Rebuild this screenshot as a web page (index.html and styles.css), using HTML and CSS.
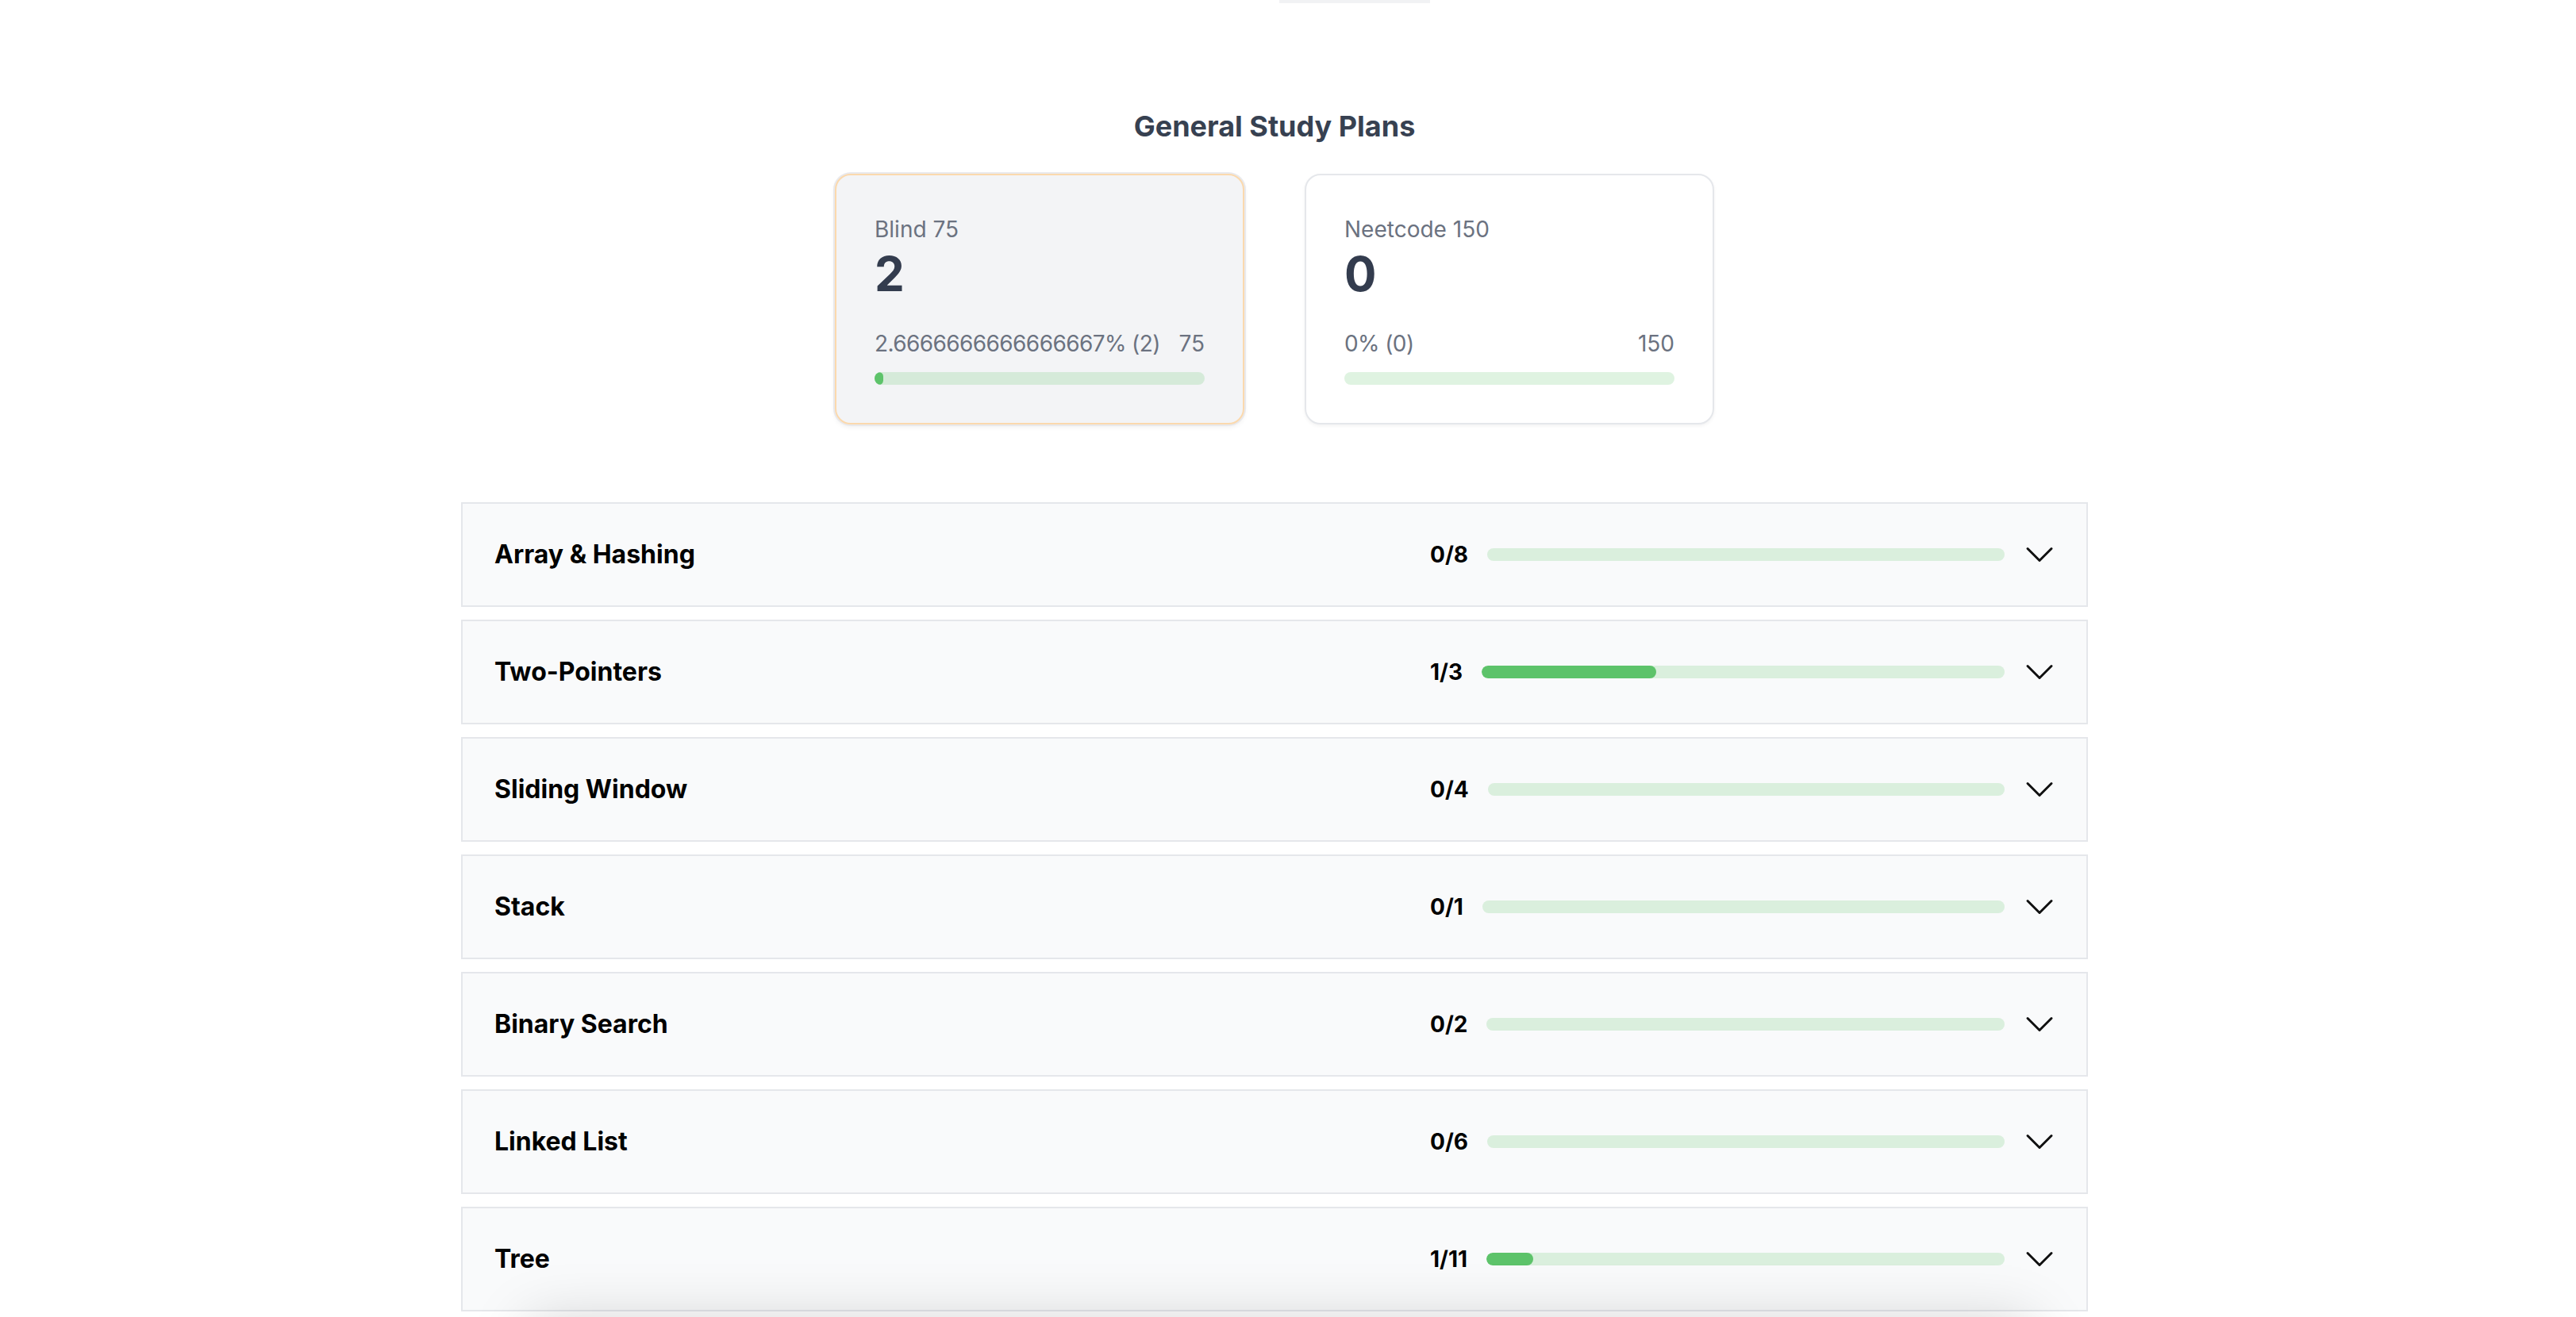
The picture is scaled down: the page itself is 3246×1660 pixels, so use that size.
FILE: index.html
```html
<!DOCTYPE html>
<html lang="en">
<head>
<meta charset="utf-8">
<title>Study Plans</title>
<link rel="stylesheet" href="styles.css">
</head>
<body>
<div class="page">
  <div class="topstub"></div>
  <h2 class="heading">General Study Plans</h2>
  <div class="plans">
    <div class="plan plan-active">
      <div class="plan-name">Blind 75</div>
      <div class="plan-count">2</div>
      <div class="plan-meta"><span class="plan-pct">2.6666666666666667% (2)</span><span>75</span></div>
      <div class="track"><div class="fill" style="width:2.67%"></div></div>
    </div>
    <div class="plan">
      <div class="plan-name">Neetcode 150</div>
      <div class="plan-count">0</div>
      <div class="plan-meta"><span class="plan-pct">0% (0)</span><span>150</span></div>
      <div class="track"><div class="fill" style="width:0%"></div></div>
    </div>
  </div>
  <div class="topics">
    <div class="topic">
      <div class="topic-title">Array &amp; Hashing</div>
      <div class="topic-right">
        <div class="topic-progress"><span class="topic-count">0/8</span><div class="track"><div class="fill" style="width:0%"></div></div></div>
        <svg class="chev" viewBox="0 0 24 24" fill="none" stroke="currentColor" stroke-width="1.5"><path stroke-linecap="round" stroke-linejoin="round" d="m19.5 8.25-7.5 7.5-7.5-7.5"/></svg>
      </div>
    </div>
    <div class="topic">
      <div class="topic-title">Two-Pointers</div>
      <div class="topic-right">
        <div class="topic-progress"><span class="topic-count">1/3</span><div class="track"><div class="fill" style="width:33.33%"></div></div></div>
        <svg class="chev" viewBox="0 0 24 24" fill="none" stroke="currentColor" stroke-width="1.5"><path stroke-linecap="round" stroke-linejoin="round" d="m19.5 8.25-7.5 7.5-7.5-7.5"/></svg>
      </div>
    </div>
    <div class="topic">
      <div class="topic-title">Sliding Window</div>
      <div class="topic-right">
        <div class="topic-progress"><span class="topic-count">0/4</span><div class="track"><div class="fill" style="width:0%"></div></div></div>
        <svg class="chev" viewBox="0 0 24 24" fill="none" stroke="currentColor" stroke-width="1.5"><path stroke-linecap="round" stroke-linejoin="round" d="m19.5 8.25-7.5 7.5-7.5-7.5"/></svg>
      </div>
    </div>
    <div class="topic">
      <div class="topic-title">Stack</div>
      <div class="topic-right">
        <div class="topic-progress"><span class="topic-count">0/1</span><div class="track"><div class="fill" style="width:0%"></div></div></div>
        <svg class="chev" viewBox="0 0 24 24" fill="none" stroke="currentColor" stroke-width="1.5"><path stroke-linecap="round" stroke-linejoin="round" d="m19.5 8.25-7.5 7.5-7.5-7.5"/></svg>
      </div>
    </div>
    <div class="topic">
      <div class="topic-title">Binary Search</div>
      <div class="topic-right">
        <div class="topic-progress"><span class="topic-count">0/2</span><div class="track"><div class="fill" style="width:0%"></div></div></div>
        <svg class="chev" viewBox="0 0 24 24" fill="none" stroke="currentColor" stroke-width="1.5"><path stroke-linecap="round" stroke-linejoin="round" d="m19.5 8.25-7.5 7.5-7.5-7.5"/></svg>
      </div>
    </div>
    <div class="topic">
      <div class="topic-title">Linked List</div>
      <div class="topic-right">
        <div class="topic-progress"><span class="topic-count">0/6</span><div class="track"><div class="fill" style="width:0%"></div></div></div>
        <svg class="chev" viewBox="0 0 24 24" fill="none" stroke="currentColor" stroke-width="1.5"><path stroke-linecap="round" stroke-linejoin="round" d="m19.5 8.25-7.5 7.5-7.5-7.5"/></svg>
      </div>
    </div>
    <div class="topic">
      <div class="topic-title">Tree</div>
      <div class="topic-right">
        <div class="topic-progress"><span class="topic-count">1/11</span><div class="track"><div class="fill" style="width:9.09%"></div></div></div>
        <svg class="chev" viewBox="0 0 24 24" fill="none" stroke="currentColor" stroke-width="1.5"><path stroke-linecap="round" stroke-linejoin="round" d="m19.5 8.25-7.5 7.5-7.5-7.5"/></svg>
      </div>
    </div>
  </div>
</div>
<div class="dock"></div>
</body>
</html>
```
FILE: styles.css
```css
* { box-sizing: border-box; }
html, body { margin: 0; padding: 0; background: #ffffff; }
body {
  font-family: Inter, "Noto Sans", "Liberation Sans", sans-serif;
  color: #111827;
  padding-right: 34px;
  overflow: hidden;
  height: 1660px;
}
.page { width: 2050px; margin: 0 auto; }
.topstub { width: 190px; height: 4px; background: #f1f2f4; margin-left: 1031px; }
.heading {
  margin: 127px 0 32px;
  text-align: center;
  font-size: 36px;
  line-height: 56px;
  font-weight: 650;
  color: #374151;
}
.plans { display: flex; justify-content: center; gap: 76px; }
.plan {
  width: 516px;
  padding: 48px;
  border: 2px solid #e5e7eb;
  border-radius: 20px;
  background: #ffffff;
  box-shadow: 0 2px 4px rgba(0,0,0,0.05);
}
.plan-active {
  background: #f3f4f6;
  border-color: #fbd9ad;
  box-shadow: 0 0 0 2px #e9e9ec, 0 3px 6px rgba(0,0,0,0.07);
}
.plan-name { font-size: 28px; line-height: 40px; color: #6b7280; }
.plan-count { font-size: 60px; line-height: 72px; font-weight: 700; color: #333c4e; }
.plan-meta {
  margin-top: 32px;
  display: flex;
  justify-content: space-between;
  gap: 20px;
  font-size: 28px;
  line-height: 40px;
  color: #6b7280;
  white-space: nowrap;
}
.plan-pct { letter-spacing: -0.6px; }
.track {
  height: 16px;
  border-radius: 8px;
  background: rgba(94,196,107,0.2);
  overflow: hidden;
}
.plan .track { margin-top: 16px; }
.fill { height: 100%; border-radius: 8px; background: #5dc36a; }
.topics { margin-top: 98px; display: flex; flex-direction: column; gap: 16px; }
.topic {
  display: flex;
  align-items: center;
  justify-content: space-between;
  padding: 40px 35px 40px 40px;
  background: #f9fafb;
  border: 2px solid #e5e7eb;
}
.topic-title { font-size: 32px; line-height: 48px; font-weight: 700; color: #000000; }
.topic-right { display: flex; align-items: center; gap: 20px; }
.topic-progress { width: 724px; display: flex; align-items: center; gap: 24px; }
.topic-progress .track { flex: 1; }
.topic-count { font-size: 28px; line-height: 40px; font-weight: 700; color: #000000; }
.chev { width: 48px; height: 48px; color: #111111; display: block; }
.dock {
  position: fixed;
  left: 700px;
  right: 720px;
  top: 1700px;
  height: 200px;
  box-shadow: 0 0 70px 34px rgba(0,0,0,0.18);
  background: #fff;
}
```
